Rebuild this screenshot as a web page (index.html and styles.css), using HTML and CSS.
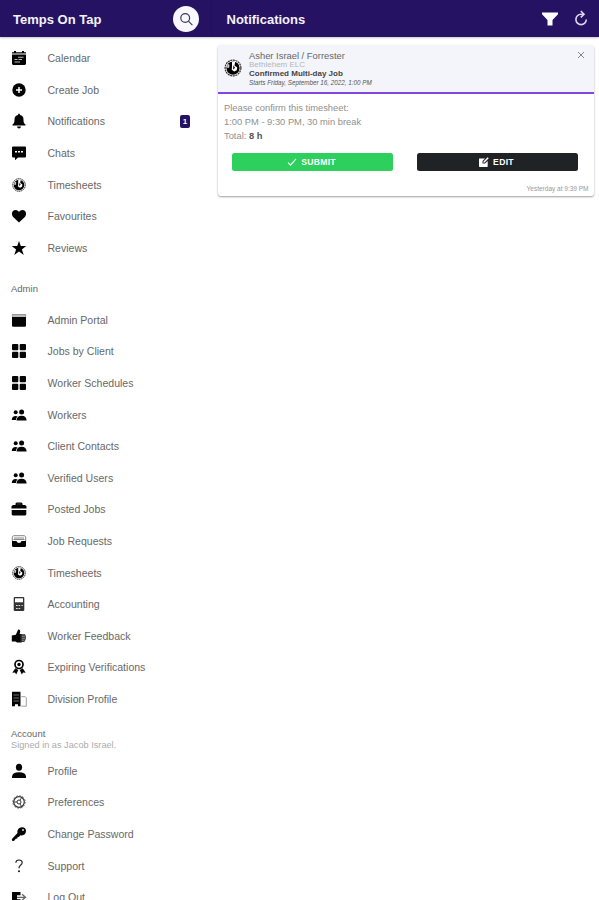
FILE: index.html
```
<!DOCTYPE html>
<html lang="en">
<head>
<meta charset="utf-8">
<title>Temps On Tap</title>
<link rel="stylesheet" href="styles.css">
</head>
<body>
<svg class="defs" aria-hidden="true">
  <symbol id="calendar" viewBox="0 0 16 16"><path d="M1 3.5V2.200h2V1h2v1.200h6V1h2v1.200h2v1.300zM1 4.500h14V14l-1 1H2l-1-1z"/><path d="M7 7.300h5.500M3.500 9.500h3M7.500 9.500h3.500M3.500 12h5.500" stroke="#bbb" stroke-width="1.100"/></symbol>
  <symbol id="plus" viewBox="0 0 16 16"><circle cx="8" cy="8" r="6.700"/><path d="M8 5v6M5 8h6" stroke="#fff" stroke-width="1.500"/></symbol>
  <symbol id="bell" viewBox="0 0 16 16"><path d="M7 2q0-1.500 1-1.500T9 2q3.500.8 3.500 4.500c0 3 .5 4 2 5v1h-13v-1c1.500-1 2-2 2-5Q3.500 2.800 7 2zM6 13.500h4q-.3 2-2 2t-2-2z"/></symbol>
  <symbol id="chat" viewBox="0 0 16 16"><path d="M2 1.500h12q1 0 1 1v9q0 1-1 1H7l-3 2.700v-2.700H2q-1 0-1-1v-9q0-1 1-1z"/><path d="M4 6.700h2M7 6.700h2M10 6.700h2" stroke="#fff" stroke-width="1.600"/></symbol>
  <symbol id="clock" viewBox="0 0 16 16"><circle cx="8" cy="8" r="6.300" fill="#fff" stroke="#333" stroke-width="1" stroke-dasharray="1.600 .5"/><circle cx="8" cy="8" r="5.300"/><path d="M7.200 2.900l2.600-.1-.6 3.200 2.200 1.500-.4 2.200-2 1-2-1.300.2-2.600z" fill="#fff"/><path d="M3.500 4.500l1.700.8-.3 2.400-1.600.2z" fill="#ccc"/><path d="M8.300 5.800l1.300 2-1.500 1.300z"/></symbol>
  <symbol id="heart" viewBox="0 0 16 16"><path d="M8 14.500L2.400 9.300C-.5 6 1.300 2 4.500 2 6.500 2 7.500 3 8 4.200 8.500 3 9.500 2 11.500 2 14.700 2 16.500 6 13.600 9.300z"/></symbol>
  <symbol id="star" viewBox="0 0 16 16"><path d="M8 1l1.800 5.100h5.400l-4.300 3.300 1.800 5.500L8 11.600l-4.700 3.300 1.800-5.500L.8 6.100h5.400z"/></symbol>
  <symbol id="window" viewBox="0 0 16 16"><path d="M1 4.800h14V14l-.8.700H1.800L1 14z"/><path d="M1.300 4.500V2.500h13.400v2" fill="#bbb" stroke="#777" stroke-width=".7"/></symbol>
  <symbol id="grid" viewBox="0 0 16 16"><rect x="1" y="1" width="6.300" height="6.300" rx="1"/><rect x="8.700" y="1" width="6.300" height="6.300" rx="1"/><rect x="1" y="8.700" width="6.300" height="6.300" rx="1"/><rect x="8.700" y="8.700" width="6.300" height="6.300" rx="1"/></symbol>
  <symbol id="people" viewBox="0 0 16 16"><circle cx="4.700" cy="5.300" r="2"/><circle cx="10.600" cy="4.900" r="2.500"/><path d="M.8 12.900q0-4 4-4 1.200 0 1.800.5-1.600 1-1.700 3.500zM5.500 13.500q.2-4.800 5.100-4.800t5 4.800z"/></symbol>
  <symbol id="briefcase" viewBox="0 0 16 16"><path d="M4.500 4V2.500l1-1h5l1 1V4H14l1.500 1.200V7.500H.5V5.200L2 4zM.7 9h14.600v4.500l-1 1H1.700l-1-1z"/><path d="M6 3h4" stroke="#666" stroke-width=".6"/></symbol>
  <symbol id="tray" viewBox="0 0 16 16"><path d="M1.300 8V4l1.200-1.300h11L14.700 4v4M3 5h10M2.500 6.500h11" fill="none" stroke="#777" stroke-width=".9"/><path d="M1 8h4.500q.5 2 2.500 2t2.500-2H15v5.200l-1 .8H2l-1-.8z"/></symbol>
  <symbol id="calculator" viewBox="0 0 16 16"><path d="M3.500 1h9l.8.800V7H2.700V1.800zM2.700 7h10.600v7.300l-.8.700h-9l-.8-.7z" fill="#333"/><path d="M4 2.300h8v4H4z" fill="#fff"/><path d="M5 9.500h1.700M7.500 9.500h1.700M5 12.500h1.700M7.500 12.500h1.700M10.500 9.500h1.300" stroke="#ddd" stroke-width="1.100"/></symbol>
  <symbol id="thumb" viewBox="0 0 16 16"><path d="M.8 7.500l4-.7L7.200 1.500q2.300-.3 2 2L8.700 6h2v8.500H6L4.500 13.500H.8z"/><path d="M9.500 6.200h4.300q1 .4.800 1.500.7 1 .2 2 .3 1.300-.4 2 0 2-1.600 2.300H9.500z" fill="#333"/><path d="M11 8.300h3M11 10.300h3M11 12.200h2.500" stroke="#aaa" stroke-width=".8"/></symbol>
  <symbol id="ribbon" viewBox="0 0 16 16"><circle cx="8" cy="5.500" r="4" fill="#fff" stroke="#000" stroke-width="1.700"/><circle cx="8" cy="5.500" r="1.700"/><path d="M4.300 9.200l3 1.700-2.100 4.600-1.200-2-2.700.3zM11.700 9.200l-3 1.700 2.100 4.600 1.200-2 2.700.3z"/></symbol>
  <symbol id="building" viewBox="0 0 16 16"><path d="M1 .8h8.500v14.500H7v-2H4v2H1z"/><path d="M2.500 4h5.500M2.500 7h5.500M2.500 10h5.500" stroke="#888" stroke-width=".8"/><path d="M10.300 5.700h4l1 1v8.500h-5" fill="none" stroke="#888" stroke-width=".8"/></symbol>
  <symbol id="person" viewBox="0 0 16 16"><ellipse cx="8" cy="4.300" rx="3.100" ry="3.500"/><path d="M1 15v-1.500Q1.500 9.300 8 9.300t7 4.200V15z"/></symbol>
  <symbol id="cog" viewBox="0 0 16 16"><circle cx="8" cy="8" r="5.300" fill="none" stroke="#333" stroke-width="1.200"/><circle cx="8" cy="8" r="6.200" fill="none" stroke="#444" stroke-width=".8" stroke-dasharray="1.700 1.500"/><circle cx="8" cy="8" r="2" fill="none" stroke="#333"/><path d="M2.500 8H6M9 6.200l2.200-3.700M9 9.800l2.200 3.700" stroke="#333" stroke-width=".9"/></symbol>
  <symbol id="key" viewBox="0 0 16 16"><path d="M1 14.800l-.1-1.700 5.600-6C5.700 4 8 1.200 11 1.200q4 .2 4 3.800c0 3-2.600 5-5.600 4.200L7.800 11l-1.300.2-.2 1.400-1.500.2L3 14.900z"/><circle cx="12" cy="4" r="1" fill="#ddd"/></symbol>
  <symbol id="help" viewBox="0 0 16 16"><path d="M4.800 4.800Q5 2 8 2t3.200 2.500Q11.200 6 9.500 7.200 8 8.300 8 10.300" fill="none" stroke="#222" stroke-width="1.200"/><circle cx="8" cy="13.200" r=".95"/></symbol>
  <symbol id="logout" viewBox="0 0 16 16"><path d="M1.500 3h8v3.300H6v4h3.500V14h-8l-.5-1V3.500z"/><path d="M6 8.300h8M11 5.300l3.500 3-3.500 3" fill="none" stroke="#666" stroke-width="1.300"/></symbol>
</svg>
<div class="app">
  <aside class="sidebar">
    <header class="bar">
      <h1 class="title">Temps On Tap</h1>
      <button class="search" aria-label="Search"><svg viewBox="0 0 26 26"><circle cx="12.200" cy="12" r="4.400"/><path d="M15.400 15.200l4 4"/></svg></button>
    </header>
    <nav class="menu">
      <a class="item"><svg><use href="#calendar"/></svg>Calendar</a>
      <a class="item"><svg><use href="#plus"/></svg>Create Job</a>
      <a class="item"><svg><use href="#bell"/></svg>Notifications<span class="count">1</span></a>
      <a class="item"><svg><use href="#chat"/></svg>Chats</a>
      <a class="item"><svg><use href="#clock"/></svg>Timesheets</a>
      <a class="item"><svg><use href="#heart"/></svg>Favourites</a>
      <a class="item"><svg><use href="#star"/></svg>Reviews</a>
      <div class="group">Admin</div>
      <a class="item"><svg><use href="#window"/></svg>Admin Portal</a>
      <a class="item"><svg><use href="#grid"/></svg>Jobs by Client</a>
      <a class="item"><svg><use href="#grid"/></svg>Worker Schedules</a>
      <a class="item"><svg><use href="#people"/></svg>Workers</a>
      <a class="item"><svg><use href="#people"/></svg>Client Contacts</a>
      <a class="item"><svg><use href="#people"/></svg>Verified Users</a>
      <a class="item"><svg><use href="#briefcase"/></svg>Posted Jobs</a>
      <a class="item"><svg><use href="#tray"/></svg>Job Requests</a>
      <a class="item"><svg><use href="#clock"/></svg>Timesheets</a>
      <a class="item"><svg><use href="#calculator"/></svg>Accounting</a>
      <a class="item"><svg><use href="#thumb"/></svg>Worker Feedback</a>
      <a class="item"><svg><use href="#ribbon"/></svg>Expiring Verifications</a>
      <a class="item"><svg><use href="#building"/></svg>Division Profile</a>
      <div class="group account">Account<small>Signed in as Jacob Israel.</small></div>
      <a class="item"><svg><use href="#person"/></svg>Profile</a>
      <a class="item"><svg><use href="#cog"/></svg>Preferences</a>
      <a class="item"><svg><use href="#key"/></svg>Change Password</a>
      <a class="item"><svg><use href="#help"/></svg>Support</a>
      <a class="item"><svg><use href="#logout"/></svg>Log Out</a>
    </nav>
  </aside>
  <main class="content">
    <header class="bar">
      <h2 class="title">Notifications</h2>
      <svg class="filter" viewBox="0 0 16 14"><path d="M0 .5h16v1.800L10.500 8v5.500h-5V8L0 2.300z"/></svg>
      <svg class="refresh" viewBox="0 0 14 16"><path d="M9.500 4.200H7A5.200 5.200 0 1 0 12.300 9.500"/><path d="M6.800 1l3.200 3.200-3.200 3.200"/></svg>
    </header>
    <article class="card">
      <div class="card-head">
        <svg class="avatar"><use href="#clock"/></svg>
        <div class="who">
          <div class="name">Asher Israel / Forrester</div>
          <div class="place">Bethlehem ELC</div>
          <div class="kind">Confirmed Multi-day Job</div>
          <div class="start">Starts Friday, September 16, 2022, 1:00 PM</div>
        </div>
        <svg class="close" viewBox="0 0 8 8"><path d="M1 1l6 6M7 1L1 7"/></svg>
      </div>
      <div class="card-body">
        <p>Please confirm this timesheet:</p>
        <p>1:00 PM - 9:30 PM, 30 min break</p>
        <p>Total: <b>8 h</b></p>
        <div class="actions">
          <button class="btn submit"><svg viewBox="0 0 10 10"><path d="M1 5.500l2.500 2.700L9 1.800" fill="none" stroke="#fff" stroke-width="1.100"/></svg>SUBMIT</button>
          <button class="btn edit"><svg viewBox="0 0 10 10"><path d="M0 1.500h6L3.500 4v2.500H6L8.700 4v5.500l-.5.500H.5L0 9.500zM4.300 5.800l.2-1.400L8.700.3l1 1-4.100 4.200z" fill="#fff"/></svg>EDIT</button>
        </div>
        <time class="when">Yesterday at 9:39 PM</time>
      </div>
    </article>
  </main>
</div>
</body>
</html>
```

FILE: styles.css
```
* { box-sizing: border-box; }
body { margin: 0; height: 900px; overflow: hidden; background: #fff; font-family: "Liberation Sans", Arial, sans-serif; color: #666; }
.defs { display: none; }
.app { display: grid; grid-template-columns: 212px 1fr; height: 900px; overflow: hidden; }
.bar { display: flex; align-items: center; height: 37px; background: #251263; box-shadow: 0 1px 2px rgba(0, 0, 0, .22); padding: 2px 13px 0; }
.title { flex: 1; margin: 0; font-size: 13px; line-height: 16px; font-weight: 700; color: #f4f2fa; white-space: nowrap; }
.search { width: 26px; height: 26px; margin: -1px 0 0; padding: 0; border: 0; border-radius: 50%; background: #f8f7fc; }
.search svg { display: block; fill: none; stroke: #40375f; stroke-width: 1.200; }

.menu { padding-top: 5.500px; }
.item { display: flex; align-items: center; height: 31.600px; padding: 0 22px 0 11px; font-size: 10.550px; white-space: nowrap; color: #686868; }
.item svg { width: 16px; height: 16px; margin-right: 20.500px; fill: #050505; flex: none; }
.count { margin-left: auto; width: 10px; height: 13px; border-radius: 2px; background: #251263; color: #fff; font-size: 8px; line-height: 13px; font-weight: 700; text-align: center; }
.group { height: 40.300px; padding: 19px 11px 0; font-size: 9.500px; line-height: 12px; color: #666; }
.group.account { padding-top: 13.500px; }
.group small { display: block; font-size: 9.200px; line-height: 11.500px; color: #acacac; white-space: nowrap; }

.content .bar { padding: 2px 11px 0 14.500px; }
.filter { width: 16px; height: 14px; margin: -1px 16px 0 0; fill: #fff; }
.refresh { width: 14px; height: 16px; margin-top: -3px; fill: none; stroke: #ddd8ec; stroke-width: 1.600; }
.card { margin: 8px 5.500px 0; height: 151px; border-radius: 3px; background: #fff; box-shadow: 0 1px 2px rgba(0, 0, 0, .38); overflow: hidden; }
.card-head { display: flex; height: 49px; padding: 4.500px 9px 0 5.500px; background: #f3f5fa; border-bottom: 2px solid #8045e3; }
.avatar { width: 20px; height: 20px; margin: 8px 6px 0 0; }
.who { flex: 1; white-space: nowrap; }
.name { font-size: 9.400px; line-height: 11px; }
.place { font-size: 8px; line-height: 8.500px; color: #b4b6ba; }
.kind { font-size: 8px; line-height: 10px; font-weight: 700; color: #444; }
.start { font-size: 6.300px; line-height: 8px; font-style: italic; color: #555; }
.close { width: 8px; height: 8px; margin-top: 1px; fill: none; stroke: #777; stroke-width: .9; }
.card-body { padding: 7px 5px 0 6.500px; font-size: 9.350px; line-height: 14px; color: #909090; }
.card-body p { margin: 0; }
.card-body b { color: #555; }
.actions { display: grid; grid-template-columns: 1fr 1fr; gap: 24px; padding: 10px 10.500px 0 8px; }
.btn { display: flex; align-items: center; justify-content: center; height: 18px; padding: 0 2px 0 0; border: 0; border-radius: 2.500px; color: #fff; font: 700 8.600px "Liberation Sans", Arial, sans-serif; letter-spacing: .3px; }
.btn svg { width: 10px; height: 10px; margin-right: 4px; }
.submit { background: #2dd05c; }
.edit { background: #202326; }
.when { display: block; margin-top: 11px; font-size: 6.500px; line-height: 13px; text-align: right; color: #999; }
```
